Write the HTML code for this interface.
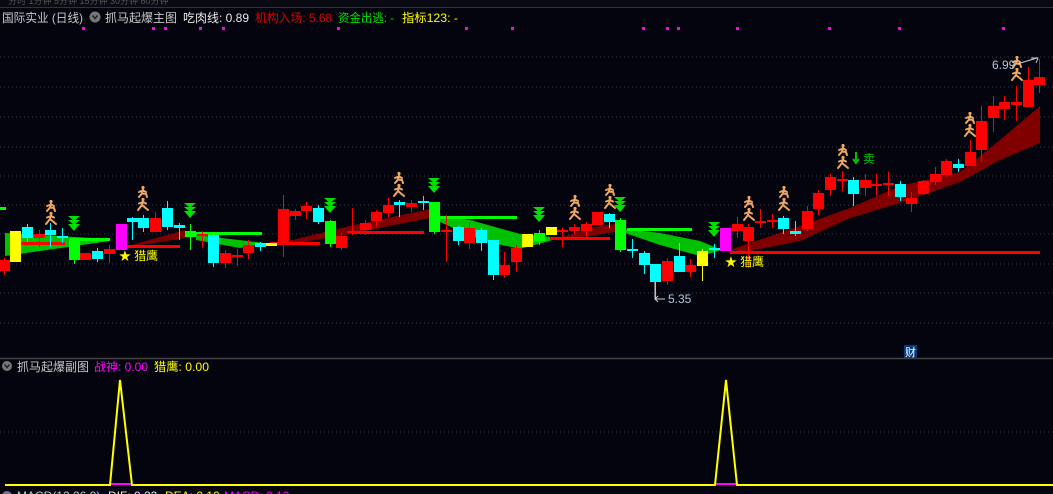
<!DOCTYPE html>
<html><head><meta charset="utf-8"><style>
html,body{margin:0;padding:0;background:#04040e;width:1053px;height:494px;overflow:hidden}
svg{display:block}
text{font-family:"Liberation Sans","Noto Sans CJK SC",sans-serif}
</style></head><body>
<svg width="1053" height="494" viewBox="0 0 1053 494" xmlns="http://www.w3.org/2000/svg">
<defs>
<g id="run" fill="none" stroke="#f0a860" stroke-width="2" stroke-linecap="round">
<circle cx="0" cy="1.5" r="1.6" fill="#f0a860" stroke="none"/>
<path d="M0 3.5 L-1 7.5 M-4 6 L0 4.5 L3 6 M-1 7.5 L-4 11 M-1 7.5 L3 8 L4 11"/>
<circle cx="0" cy="13.5" r="1.6" fill="#f0a860" stroke="none"/>
<path d="M0 15.5 L-1 19 M-4 17.5 L0 16 L3 17.5 M-1 19 L-5 24 M-1 19 L5 24"/>
</g>
<g id="arr" fill="#00e000">
<polygon points="-6,0 6,0 0,5"/><polygon points="-6,4 6,4 0,9"/><polygon points="-6,8 6,8 0,15"/>
</g>
</defs>
<rect width="1053" height="494" fill="#04040e"/>
<rect x="0" y="0" width="1053" height="7" fill="#0a0a12"/>
<line x1="0" y1="7.5" x2="1053" y2="7.5" stroke="#333" />
<g fill="#555" font-size="9"><text x="8" y="4">分时 1分钟 5分钟 15分钟 30分钟 60分钟</text></g>
<g stroke="#3a3a44" stroke-dasharray="1,3">
<line x1="0" y1="57" x2="1053" y2="57"/><line x1="0" y1="87" x2="1053" y2="87"/><line x1="0" y1="117" x2="1053" y2="117"/><line x1="0" y1="147" x2="1053" y2="147"/><line x1="0" y1="176" x2="1053" y2="176"/><line x1="0" y1="205" x2="1053" y2="205"/><line x1="0" y1="234" x2="1053" y2="234"/><line x1="0" y1="264" x2="1053" y2="264"/><line x1="0" y1="293" x2="1053" y2="293"/><line x1="0" y1="323" x2="1053" y2="323"/>
<line x1="0" y1="432" x2="1053" y2="432"/>
</g>
<g font-size="12">
<text x="2" y="22" fill="#c8c8c8" textLength="81" lengthAdjust="spacingAndGlyphs">国际实业 (日线)</text>
<circle cx="95" cy="17" r="5.5" fill="#777"/><path d="M92.5 15.5 L95 18.5 L97.5 15.5" stroke="#222" stroke-width="1.5" fill="none"/>
<text x="105" y="22" fill="#c8c8c8" textLength="72" lengthAdjust="spacingAndGlyphs">抓马起爆主图</text>
<text x="183" y="22" fill="#e8e8e8" textLength="66" lengthAdjust="spacingAndGlyphs">吃肉线: 0.89</text>
<text x="255" y="22" fill="#e00000" textLength="77" lengthAdjust="spacingAndGlyphs">机构入场: 5.68</text>
<text x="338" y="22" fill="#00e000" textLength="56" lengthAdjust="spacingAndGlyphs">资金出逃: -</text>
<text x="402" y="22" fill="#ffff00" textLength="56" lengthAdjust="spacingAndGlyphs">指标123: -</text>
</g>
<g fill="#ff00ff">
<rect x="82" y="27" width="3" height="3"/><rect x="152" y="27" width="3" height="3"/><rect x="164" y="27" width="3" height="3"/><rect x="199" y="27" width="3" height="3"/><rect x="222" y="27" width="3" height="3"/><rect x="337" y="27" width="3" height="3"/><rect x="465" y="27" width="3" height="3"/><rect x="511" y="27" width="3" height="3"/><rect x="642" y="27" width="3" height="3"/><rect x="666" y="27" width="3" height="3"/><rect x="677" y="27" width="3" height="3"/><rect x="736" y="27" width="3" height="3"/><rect x="828" y="27" width="3" height="3"/><rect x="898" y="27" width="3" height="3"/><rect x="1002" y="27" width="3" height="3"/>
</g>
<g fill="#00c000">
<polygon points="5,233 110,239 110,241 5,256"/>
<polygon points="196,235 265,243 240,248 196,240"/>
<polygon points="430,215 470,220 520,234 560,238 520,249 480,240 440,222"/>
<polygon points="615,228 660,233 700,241 722,250 700,256 660,245 625,233"/>
</g>
<g fill="#800000">
<polygon points="128,246 185,230 185,238 128,247"/>
<polygon points="280,243 350,226 430,209 430,218 350,234 290,244"/>
<polygon points="560,238 590,228 615,224 615,232 590,236 560,239"/>
<polygon points="730,250 800,226 850,208 900,186 960,172 1000,140 1040,106 1040,143 1000,160 960,182 900,203 850,218 800,241 745,252"/>
</g>
<g fill="#ff0000">
<rect x="20" y="242" width="45" height="3"/><rect x="127" y="245" width="53" height="3"/><rect x="270" y="242" width="50" height="3"/><rect x="352" y="231" width="72" height="3"/><rect x="550" y="237" width="60" height="3"/><rect x="730" y="251" width="310" height="3"/>
</g>
<g fill="#00ff00">
<rect x="70" y="238" width="40" height="3"/><rect x="185" y="232" width="77" height="3"/><rect x="440" y="216" width="77" height="3"/><rect x="627" y="228" width="65" height="3"/><rect x="0" y="207" width="6" height="3"/>
</g>
<g>
<rect x="4" y="258" width="1" height="17" fill="#f00"/><rect x="-1" y="260" width="11" height="11" fill="#f00"/>
<rect x="10" y="231" width="11" height="31" fill="#ff0"/>
<rect x="27" y="224" width="1" height="18" fill="#0ff"/><rect x="22" y="227" width="11" height="11" fill="#0ff"/>
<rect x="39" y="230" width="1" height="17" fill="#f00"/><rect x="34" y="234" width="11" height="4" fill="#f00"/>
<rect x="50" y="223" width="1" height="24" fill="#0ff"/><rect x="45" y="230" width="11" height="5" fill="#0ff"/>
<rect x="62" y="228" width="1" height="15" fill="#0ff"/><rect x="57" y="236" width="11" height="2" fill="#0ff"/>
<rect x="74" y="239" width="1" height="25" fill="#0f0"/><rect x="69" y="239" width="11" height="21" fill="#0f0"/>
<rect x="80" y="253" width="11" height="7" fill="#f00"/>
<rect x="97" y="248" width="1" height="14" fill="#0ff"/><rect x="92" y="251" width="11" height="8" fill="#0ff"/>
<rect x="109" y="245" width="1" height="18" fill="#f00"/><rect x="104" y="249" width="11" height="5" fill="#f00"/>
<rect x="116" y="224" width="11" height="26" fill="#f0f"/>
<rect x="132" y="217" width="1" height="23" fill="#0ff"/><rect x="127" y="218" width="11" height="4" fill="#0ff"/>
<rect x="143" y="215" width="1" height="17" fill="#0ff"/><rect x="138" y="218" width="11" height="10" fill="#0ff"/>
<rect x="155" y="212" width="1" height="20" fill="#f00"/><rect x="150" y="218" width="11" height="14" fill="#f00"/>
<rect x="167" y="201" width="1" height="29" fill="#0ff"/><rect x="162" y="208" width="11" height="19" fill="#0ff"/>
<rect x="179" y="223" width="1" height="17" fill="#0ff"/><rect x="174" y="225" width="11" height="3" fill="#0ff"/>
<rect x="190" y="224" width="1" height="26" fill="#0f0"/><rect x="185" y="231" width="11" height="6" fill="#0f0"/>
<rect x="202" y="231" width="1" height="17" fill="#f00"/><rect x="197" y="234" width="11" height="2" fill="#f00"/>
<rect x="213" y="233" width="1" height="34" fill="#0ff"/><rect x="208" y="235" width="11" height="28" fill="#0ff"/>
<rect x="225" y="250" width="1" height="18" fill="#f00"/><rect x="220" y="253" width="11" height="10" fill="#f00"/>
<rect x="237" y="249" width="1" height="17" fill="#f00"/><rect x="232" y="255" width="11" height="2" fill="#f00"/>
<rect x="248" y="240" width="1" height="19" fill="#f00"/><rect x="243" y="245" width="11" height="8" fill="#f00"/>
<rect x="260" y="242" width="1" height="9" fill="#0ff"/><rect x="255" y="243" width="11" height="4" fill="#0ff"/>
<rect x="266" y="243" width="11" height="3" fill="#ff0"/>
<rect x="283" y="195" width="1" height="62" fill="#f00"/><rect x="278" y="209" width="11" height="34" fill="#f00"/>
<rect x="295" y="209" width="1" height="11" fill="#f00"/><rect x="290" y="211" width="11" height="5" fill="#f00"/>
<rect x="306" y="202" width="1" height="17" fill="#f00"/><rect x="301" y="206" width="11" height="5" fill="#f00"/>
<rect x="318" y="205" width="1" height="19" fill="#0ff"/><rect x="313" y="208" width="11" height="14" fill="#0ff"/>
<rect x="330" y="220" width="1" height="27" fill="#0f0"/><rect x="325" y="221" width="11" height="23" fill="#0f0"/>
<rect x="341" y="233" width="1" height="17" fill="#f00"/><rect x="336" y="236" width="11" height="12" fill="#f00"/>
<rect x="352" y="208" width="1" height="27" fill="#f00"/><rect x="347" y="231" width="11" height="2" fill="#f00"/>
<rect x="365" y="220" width="1" height="15" fill="#f00"/><rect x="360" y="223" width="11" height="7" fill="#f00"/>
<rect x="376" y="210" width="1" height="17" fill="#f00"/><rect x="371" y="212" width="11" height="9" fill="#f00"/>
<rect x="388" y="198" width="1" height="19" fill="#f00"/><rect x="383" y="205" width="11" height="8" fill="#f00"/>
<rect x="399" y="200" width="1" height="17" fill="#0ff"/><rect x="394" y="202" width="11" height="3" fill="#0ff"/>
<rect x="411" y="200" width="1" height="12" fill="#f00"/><rect x="406" y="203" width="11" height="4" fill="#f00"/>
<rect x="423" y="196" width="1" height="14" fill="#0ff"/><rect x="418" y="201" width="11" height="2" fill="#0ff"/>
<rect x="434" y="202" width="1" height="32" fill="#0f0"/><rect x="429" y="202" width="11" height="30" fill="#0f0"/>
<rect x="446" y="215" width="1" height="47" fill="#f00"/><rect x="441" y="230" width="11" height="2" fill="#f00"/>
<rect x="458" y="226" width="1" height="19" fill="#0ff"/><rect x="453" y="227" width="11" height="14" fill="#0ff"/>
<rect x="469" y="222" width="1" height="27" fill="#f00"/><rect x="464" y="228" width="11" height="15" fill="#f00"/>
<rect x="481" y="228" width="1" height="23" fill="#0ff"/><rect x="476" y="230" width="11" height="13" fill="#0ff"/>
<rect x="493" y="240" width="1" height="40" fill="#0ff"/><rect x="488" y="240" width="11" height="35" fill="#0ff"/>
<rect x="504" y="252" width="1" height="26" fill="#f00"/><rect x="499" y="265" width="11" height="10" fill="#f00"/>
<rect x="516" y="245" width="1" height="27" fill="#f00"/><rect x="511" y="248" width="11" height="14" fill="#f00"/>
<rect x="522" y="234" width="11" height="13" fill="#ff0"/>
<rect x="539" y="230" width="1" height="15" fill="#0f0"/><rect x="534" y="233" width="11" height="8" fill="#0f0"/>
<rect x="546" y="227" width="11" height="8" fill="#ff0"/>
<rect x="562" y="228" width="1" height="19" fill="#f00"/><rect x="557" y="230" width="11" height="2" fill="#f00"/>
<rect x="574" y="224" width="1" height="10" fill="#f00"/><rect x="569" y="227" width="11" height="4" fill="#f00"/>
<rect x="586" y="222" width="1" height="18" fill="#f00"/><rect x="581" y="224" width="11" height="7" fill="#f00"/>
<rect x="592" y="212" width="11" height="13" fill="#f00"/>
<rect x="609" y="213" width="1" height="15" fill="#0ff"/><rect x="604" y="214" width="11" height="8" fill="#0ff"/>
<rect x="620" y="218" width="1" height="34" fill="#0f0"/><rect x="615" y="220" width="11" height="30" fill="#0f0"/>
<rect x="632" y="239" width="1" height="19" fill="#0ff"/><rect x="627" y="249" width="11" height="2" fill="#0ff"/>
<rect x="644" y="251" width="1" height="23" fill="#0ff"/><rect x="639" y="253" width="11" height="12" fill="#0ff"/>
<rect x="655" y="264" width="1" height="36" fill="#0ff"/><rect x="650" y="264" width="11" height="18" fill="#0ff"/>
<rect x="667" y="258" width="1" height="27" fill="#f00"/><rect x="662" y="261" width="11" height="20" fill="#f00"/>
<rect x="679" y="243" width="1" height="29" fill="#0ff"/><rect x="674" y="256" width="11" height="16" fill="#0ff"/>
<rect x="690" y="259" width="1" height="18" fill="#f00"/><rect x="685" y="265" width="11" height="7" fill="#f00"/>
<rect x="702" y="249" width="1" height="32" fill="#ff0"/><rect x="697" y="251" width="11" height="15" fill="#ff0"/>
<rect x="714" y="244" width="1" height="14" fill="#0ff"/><rect x="709" y="248" width="11" height="2" fill="#0ff"/>
<rect x="720" y="228" width="11" height="23" fill="#f0f"/>
<rect x="737" y="217" width="1" height="21" fill="#f00"/><rect x="732" y="224" width="11" height="7" fill="#f00"/>
<rect x="748" y="224" width="1" height="44" fill="#f00"/><rect x="743" y="227" width="11" height="14" fill="#f00"/>
<rect x="760" y="209" width="1" height="19" fill="#f00"/><rect x="755" y="221" width="11" height="2" fill="#f00"/>
<rect x="772" y="214" width="1" height="14" fill="#f00"/><rect x="767" y="220" width="11" height="2" fill="#f00"/>
<rect x="783" y="216" width="1" height="18" fill="#0ff"/><rect x="778" y="218" width="11" height="11" fill="#0ff"/>
<rect x="795" y="221" width="1" height="15" fill="#0ff"/><rect x="790" y="231" width="11" height="3" fill="#0ff"/>
<rect x="807" y="206" width="1" height="25" fill="#f00"/><rect x="802" y="211" width="11" height="18" fill="#f00"/>
<rect x="818" y="190" width="1" height="25" fill="#f00"/><rect x="813" y="193" width="11" height="16" fill="#f00"/>
<rect x="830" y="174" width="1" height="22" fill="#f00"/><rect x="825" y="177" width="11" height="13" fill="#f00"/>
<rect x="842" y="171" width="1" height="20" fill="#f00"/><rect x="837" y="179" width="11" height="2" fill="#f00"/>
<rect x="853" y="177" width="1" height="29" fill="#0ff"/><rect x="848" y="180" width="11" height="14" fill="#0ff"/>
<rect x="865" y="174" width="1" height="22" fill="#f00"/><rect x="860" y="180" width="11" height="8" fill="#f00"/>
<rect x="876" y="174" width="1" height="22" fill="#f00"/><rect x="871" y="184" width="11" height="2" fill="#f00"/>
<rect x="888" y="172" width="1" height="24" fill="#f00"/><rect x="883" y="183" width="11" height="2" fill="#f00"/>
<rect x="900" y="181" width="1" height="20" fill="#0ff"/><rect x="895" y="184" width="11" height="13" fill="#0ff"/>
<rect x="911" y="192" width="1" height="20" fill="#f00"/><rect x="906" y="198" width="11" height="6" fill="#f00"/>
<rect x="923" y="180" width="1" height="15" fill="#f00"/><rect x="918" y="181" width="11" height="13" fill="#f00"/>
<rect x="935" y="167" width="1" height="18" fill="#f00"/><rect x="930" y="174" width="11" height="8" fill="#f00"/>
<rect x="946" y="159" width="1" height="18" fill="#f00"/><rect x="941" y="161" width="11" height="14" fill="#f00"/>
<rect x="958" y="159" width="1" height="13" fill="#0ff"/><rect x="953" y="164" width="11" height="4" fill="#0ff"/>
<rect x="970" y="140" width="1" height="26" fill="#f00"/><rect x="965" y="152" width="11" height="14" fill="#f00"/>
<rect x="981" y="106" width="1" height="56" fill="#f00"/><rect x="976" y="121" width="11" height="29" fill="#f00"/>
<rect x="993" y="96" width="1" height="36" fill="#f00"/><rect x="988" y="106" width="11" height="12" fill="#f00"/>
<rect x="1004" y="96" width="1" height="24" fill="#f00"/><rect x="999" y="102" width="11" height="7" fill="#f00"/>
<rect x="1016" y="86" width="1" height="35" fill="#f00"/><rect x="1011" y="102" width="11" height="3" fill="#f00"/>
<rect x="1028" y="67" width="1" height="40" fill="#f00"/><rect x="1023" y="80" width="11" height="27" fill="#f00"/>
<rect x="1039" y="59" width="1" height="34" fill="#f00"/><rect x="1034" y="77" width="11" height="8" fill="#f00"/>
</g>
<use href="#arr" x="74" y="216"/><use href="#arr" x="190" y="203"/><use href="#arr" x="330" y="198"/><use href="#arr" x="434" y="178"/><use href="#arr" x="539" y="207"/><use href="#arr" x="620" y="197"/><use href="#arr" x="714" y="222"/>
<use href="#run" x="51" y="200"/><use href="#run" x="143" y="186"/><use href="#run" x="399" y="172"/><use href="#run" x="575" y="195"/><use href="#run" x="610" y="184"/><use href="#run" x="749" y="196"/><use href="#run" x="784" y="186"/><use href="#run" x="843" y="144"/><use href="#run" x="970" y="112"/><use href="#run" x="1017" y="56"/>
<path d="M856 152 V162 M853 159 L856 163 L859 159" stroke="#00c000" stroke-width="2" fill="none"/>
<text x="863" y="163" fill="#00d000" font-size="12">卖</text>
<text x="119" y="260" fill="#ffff00" font-size="12" textLength="39" lengthAdjust="spacingAndGlyphs">★ 猎鹰</text>
<text x="725" y="266" fill="#ffff00" font-size="12" textLength="39" lengthAdjust="spacingAndGlyphs">★ 猎鹰</text>
<text x="992" y="69" fill="#b0c8e0" font-size="12">6.99</text>
<path d="M1017 64 L1037 58 M1031 58 L1038 58 L1036 63" stroke="#ccc" fill="none"/>
<path d="M655 282 V299 M655 299 H665 M658 296 L655 299 L658 302" stroke="#ccc" fill="none"/>
<text x="668" y="303" fill="#b0c8e0" font-size="12">5.35</text>
<rect x="904" y="345" width="13" height="13" fill="#003a80"/>
<text x="905" y="356" fill="#fff" font-size="11">财</text>
<line x1="0" y1="358.5" x2="1053" y2="358.5" stroke="#404040" stroke-width="1.5"/>
<circle cx="7" cy="366" r="5" fill="#777"/><path d="M4.5 364.5 L7 367.5 L9.5 364.5" stroke="#222" stroke-width="1.5" fill="none"/>
<text x="17" y="371" fill="#c8c8c8" font-size="12" textLength="72" lengthAdjust="spacingAndGlyphs">抓马起爆副图</text>
<text x="94" y="371" fill="#ff00ff" font-size="12" textLength="54" lengthAdjust="spacingAndGlyphs">战神: 0.00</text>
<text x="154" y="371" fill="#ffff00" font-size="12" textLength="55" lengthAdjust="spacingAndGlyphs">猎鹰: 0.00</text>
<rect x="110" y="483" width="22" height="2" fill="#ff00ff"/>
<rect x="716" y="483" width="22" height="2" fill="#ff00ff"/>
<polyline points="5,485 110,485 120,380 132,485 715,485 726,380 737,485 1053,485" fill="none" stroke="#ffff00" stroke-width="2"/>
<g font-size="12">
<circle cx="7" cy="496" r="5" fill="#777"/>
<text x="17" y="500" fill="#c8c8c8">MACD(12,26,9)</text>
<text x="108" y="500" fill="#e8e8e8">DIF: 0.22</text>
<text x="165" y="500" fill="#ffff00">DEA: 0.10</text>
<text x="224" y="500" fill="#ff00ff">MACD: 0.12</text>
</g>
</svg>
</body></html>
